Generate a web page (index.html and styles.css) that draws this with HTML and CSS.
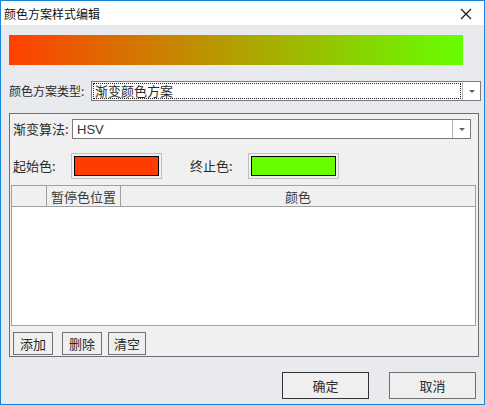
FILE: index.html
```html
<!DOCTYPE html>
<html lang="zh-CN">
<head>
  <meta charset="UTF-8">
  <title>颜色方案样式编辑</title>
  <link rel="stylesheet" href="styles.css">
</head>
<body>
  <div class="window">
    <!-- Title bar -->
    <div class="titlebar">
      <span class="title">颜色方案样式编辑</span>
      <svg class="close" width="12" height="12" viewBox="0 0 12 12">
        <path d="M1 1 L11 11 M11 1 L1 11" stroke="#111" stroke-width="1.1" fill="none"/>
      </svg>
    </div>
    <div class="content">
      <!-- Preview -->
      <div class="gradient"></div>
      <!-- Scheme type -->
      <div class="row scheme-row">
        <span class="label scheme-label">颜色方案类型:</span>
        <div class="combo scheme-combo">
          <div class="combo-text"><span class="focus">渐变颜色方案</span></div>
          <div class="combo-btn"><span class="arrow"></span></div>
        </div>
      </div>
      <!-- Settings panel -->
      <div class="panel">
        <div class="row algo-row">
          <span class="label algo-label">渐变算法:</span>
          <div class="combo algo-combo">
            <div class="combo-text plain">HSV</div>
            <div class="combo-btn"><span class="arrow"></span></div>
          </div>
        </div>
        <div class="row color-row">
          <span class="label start-label">起始色:</span>
          <div class="swatch"><div class="swatch-fill start"></div></div>
          <span class="label end-label">终止色:</span>
          <div class="swatch"><div class="swatch-fill end"></div></div>
        </div>
        <div class="table">
          <div class="thead">
            <div class="th col-idx"></div>
            <div class="th col-pos">暂停色位置</div>
            <div class="th col-color">颜色</div>
          </div>
          <div class="tbody"></div>
        </div>
        <div class="row tool-row">
          <button class="btn small">添加</button>
          <button class="btn small del">删除</button>
          <button class="btn small clear">清空</button>
        </div>
      </div>
      <!-- Dialog buttons -->
      <div class="row footer">
        <button class="btn big default">确定</button>
        <button class="btn big">取消</button>
      </div>
    </div>
  </div>
</body>
</html>
```
FILE: styles.css
```css
body {
  margin: 0;
  font-family: "Noto Sans CJK SC", "Noto Sans", sans-serif;
  font-size: 12px;
  color: #262626;
}
.window {
  width: 485px;
  height: 405px;
  box-sizing: border-box;
  border: 1px solid #1883d7;
  background: #e9eaee;
  display: flex;
  flex-direction: column;
}
.titlebar {
  height: 24px;
  background: #fff;
  display: flex;
  align-items: center;
  padding-left: 3px;
  padding-right: 12px;
}
.title {
  flex: 1;
  line-height: 14px;
  margin-top: 1px;
  color: #111;
}
.close {
  margin-top: 1px;
}
.content {
  flex: 1;
  padding: 10px 0 0 8px;
  display: flex;
  flex-direction: column;
}
.row {
  display: flex;
  align-items: center;
}
.label {
  line-height: 14px;
  color: #2a2a2a;
}
.gradient {
  width: 454px;
  height: 30px;
  background: linear-gradient(to right, #ff4000, #66ff00);
}
.scheme-row {
  margin-top: 16px;
  height: 20px;
}
.scheme-label {
  width: 82px;
}
.combo {
  height: 20px;
  box-sizing: border-box;
  border: 1px solid #7a7a7a;
  background: #fff;
  display: flex;
}
.scheme-combo {
  width: 390px;
}
.algo-combo {
  width: 399px;
}
.combo-text {
  flex: 1;
  padding: 1px;
  display: flex;
}
.combo-text.plain {
  align-items: center;
  padding-left: 4px;
  font-family: "Liberation Sans", sans-serif;
  font-size: 13px;
  color: #333;
}
.focus {
  flex: 1;
  border: 1px dotted #222;
  line-height: 14px;
  padding-left: 1px;
  font-size: 13px;
  color: #2a2a2a;
}
.combo-btn {
  width: 17px;
  border-left: 1px solid #b5b5b5;
  display: flex;
  align-items: center;
  justify-content: center;
  background: #fff;
}
.arrow {
  width: 0;
  height: 0;
  border-left: 3px solid transparent;
  border-right: 3px solid transparent;
  border-top: 3px solid #606060;
}
.panel {
  margin-top: 12px;
  width: 470px;
  height: 244px;
  box-sizing: border-box;
  border: 1px solid #6e6e6e;
  background: #f0f0f0;
  display: flex;
  flex-direction: column;
}
.algo-row {
  margin-top: 5px;
  height: 20px;
}
.algo-label {
  width: 59px;
  padding-left: 3px;
  font-size: 13px;
}
.color-row {
  margin-top: 14px;
  height: 26px;
}
.start-label {
  width: 58px;
  padding-left: 3px;
  font-size: 13px;
}
.end-label {
  width: 58px;
  padding-left: 28px;
  font-size: 13px;
}
.swatch {
  width: 91px;
  height: 26px;
  box-sizing: border-box;
  border: 1px solid #c0c0c0;
  padding: 2px;
}
.swatch-fill {
  height: 100%;
  box-sizing: border-box;
  border: 1px solid #000;
}
.start {
  background: #ff3c00;
}
.end {
  background: #66ff00;
}
.table {
  margin: 6px 0 0 1px;
  width: 465px;
  height: 141px;
  box-sizing: border-box;
  border: 1px solid #a0a0a0;
  display: flex;
  flex-direction: column;
}
.thead {
  height: 20px;
  display: flex;
  background: #f0f0f0;
  border-bottom: 1px solid #a0a0a0;
}
.th {
  display: flex;
  align-items: center;
  justify-content: center;
  font-size: 13px;
  color: #3a3a3a;
}
.col-idx {
  width: 34px;
  border-right: 1px solid #a0a0a0;
}
.col-pos {
  width: 73px;
  border-right: 1px solid #a0a0a0;
}
.col-color {
  flex: 1;
}
.tbody {
  flex: 1;
  background: #fff;
}
.tool-row {
  margin: 6px 0 0 3px;
  gap: 9px;
}
.btn {
  font-family: inherit;
  font-size: 13px;
  color: #2a2a2a;
  background: #efefef;
  border: 1px solid #707070;
  padding: 0;
  box-sizing: border-box;
}
.small {
  width: 40px;
  height: 23px;
}
.clear {
  width: 38px;
  margin-left: -3px;
}
.footer {
  margin-top: 15px;
  padding-left: 273px;
  gap: 20px;
}
.big {
  width: 87px;
  height: 27px;
}
.default {
  border-color: #333;
}
```
